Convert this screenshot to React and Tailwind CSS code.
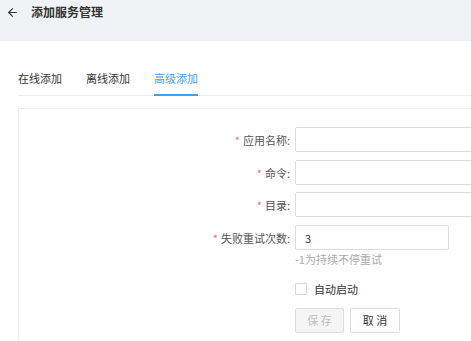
import { ArrowLeft } from "lucide-react";

const font = { fontFamily: '"Noto Sans CJK SC", "Noto Sans", sans-serif' };

const Row = ({ label, children, className = "" }) => (
  <div className={`flex items-center h-[25px] ${className}`}>
    <div className="w-[271px] shrink-0 text-right text-[11px] leading-[16px] text-[#555]">
      <span className="text-[#f56c6c] mr-[3px]">*</span>
      {label}:
    </div>
    <div className="ml-[5px] flex">{children}</div>
  </div>
);

export default function App() {
  const tabs = ["在线添加", "离线添加", "高级添加"];

  return (
    <div className="h-[341px] w-full overflow-hidden bg-white" style={font}>
      <header className="h-[41px] bg-[#f0f2f5] flex items-start pt-[4px] pl-[6px]">
        <ArrowLeft size={13} strokeWidth={2} className="mt-[2px] text-[#333]" />
        <h1 className="ml-[12px] text-[12px] leading-[16px] font-bold text-[#333]">添加服务管理</h1>
      </header>

      <div className="pl-[18px]">
        <div className="mt-[29px] flex gap-[24px] border-b border-[#ececec]">
          {tabs.map((t, i) => (
            <div
              key={t}
              className={`h-[26px] -mb-px text-[11px] leading-[16px] ${
                i === 2 ? "text-[#409eff] border-b-2 border-[#409eff]" : "text-[#333]"
              }`}
            >
              {t}
            </div>
          ))}
        </div>

        <div className="mt-[12px] w-[600px] h-[300px] border border-[#ececec] pt-[18px]">
          <Row label="应用名称">
            <input className="block w-[260px] h-[25px] border border-[#dcdcdc] rounded-[2px] outline-none" />
          </Row>
          <Row label="命令" className="mt-[8px]">
            <input className="block w-[260px] h-[25px] border border-[#dcdcdc] rounded-[2px] outline-none" />
          </Row>
          <Row label="目录" className="mt-[7px]">
            <input className="block w-[260px] h-[25px] border border-[#dcdcdc] rounded-[2px] outline-none" />
          </Row>
          <Row label="失败重试次数" className="mt-[8px]">
            <input
              defaultValue="3"
              className="block w-[154px] h-[25px] border border-[#dcdcdc] rounded-[2px] pl-[9px] text-[11px] text-[#333] outline-none"
            />
          </Row>

          <div className="ml-[276px]">
            <p className="mt-[1px] text-[11px] leading-[16px] text-[#aaa]">-1为持续不停重试</p>

            <label className="mt-[14px] flex items-center">
              <span className="w-[12px] h-[12px] border border-[#d5d5d5] rounded-[1px] bg-white" />
              <span className="ml-[7px] text-[11px] leading-[16px] text-[#333]">自动启动</span>
            </label>

            <div className="mt-[11px] flex gap-[6px]">
              <button
                disabled
                className="w-[49px] h-[25px] border border-[#dcdcdc] bg-[#f5f5f5] text-[11px] text-[#bbb] rounded-[2px]"
              >
                保 存
              </button>
              <button className="w-[50px] h-[25px] border border-[#dcdcdc] bg-white text-[11px] text-[#333] rounded-[2px]">
                取 消
              </button>
            </div>
          </div>
        </div>
      </div>
    </div>
  );
}
